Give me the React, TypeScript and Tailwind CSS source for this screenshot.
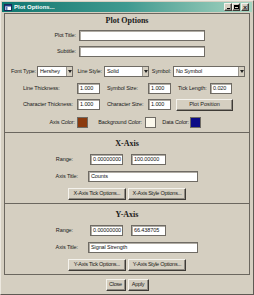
import React from 'react';

const sans = "font-['Liberation_Sans',Arial,sans-serif]";

const Label = ({ children, className = '' }: { children: React.ReactNode; className?: string }) => (
  <div className={`text-[5.5px] tracking-[-0.1px] leading-none text-[#1a1a1a] whitespace-nowrap ${className}`}>{children}</div>
);

const Field = ({ value = '', className = '' }: { value?: string; className?: string }) => (
  <div
    className={`h-[11px] bg-white border border-[#6f6b64] shadow-[inset_1px_1px_0_#b0aca4] flex items-center pl-[2px] text-[5.5px] tracking-[-0.1px] leading-none text-[#111] whitespace-nowrap overflow-hidden ${className}`}
  >
    {value}
  </div>
);

const Select = ({ value, className = '' }: { value: string; className?: string }) => (
  <div className={`h-[11px] bg-white border border-[#6f6b64] flex items-center ${className}`}>
    <span className="flex-1 pl-[2px] text-[5.5px] tracking-[-0.1px] leading-none text-[#111] whitespace-nowrap">{value}</span>
    <span className="w-[6px] h-[9px] bg-[#d5cfc1] border-l border-[#9a968e] flex items-center justify-center">
      <svg width="4" height="3" viewBox="0 0 4 3">
        <path d="M0 0h4L2 3z" fill="#222" />
      </svg>
    </span>
  </div>
);

const Btn = ({ children, className = '' }: { children: React.ReactNode; className?: string }) => (
  <div
    className={`h-[12px] bg-[#d5cfc1] border border-t-[#f4f2ec] border-l-[#f4f2ec] border-r-[#3e3b36] border-b-[#3e3b36] shadow-[inset_-1px_-1px_0_#8e8a82] flex items-center justify-center text-[5.5px] tracking-[-0.25px] leading-none text-[#1a1a1a] whitespace-pre ${className}`}
  >
    {children}
  </div>
);

const Heading = ({ children }: { children: React.ReactNode }) => (
  <div className="h-[11px] flex items-center justify-center font-['Liberation_Serif','Times_New_Roman',serif] font-bold text-[8px] leading-none text-[#1a1a1a]">
    {children}
  </div>
);

const AxisFrame = ({ name, from, to, title }: { name: string; from: string; to: string; title: string }) => (
  <div className="h-[71px] border border-t-0 border-[#6b675f] flex flex-col">
    <div className="mt-[5px]">
      <Heading>{name}-Axis</Heading>
    </div>
    <div className="mt-[5px] flex items-center h-[11px]">
      <Label className="w-[68px] text-right">Range:</Label>
      <Field value={from} className="ml-[17px] w-[33px]" />
      <Field value={to} className="ml-[8px] w-[35px]" />
    </div>
    <div className="mt-[6px] flex items-center h-[11px]">
      <Label className="w-[73px] text-right">Axis Title:</Label>
      <Field value={title} className="ml-[10px] w-[110px]" />
    </div>
    <div className="mt-[6px] flex items-center">
      <Btn className="ml-[63px] w-[58px]">{name}-Axis Tick Options...</Btn>
      <Btn className="ml-[2px] w-[58px]">{name}-Axis Style Options...</Btn>
    </div>
  </div>
);

export default function App() {
  return (
    <div className={`w-[254px] h-[295px] bg-[#d5cfc1] border border-t-[#ece8df] border-l-[#ece8df] border-r-[#5e5a53] border-b-[#5e5a53] flex flex-col ${sans}`}>
      {/* title bar */}
      <div className="mt-[1px] mx-[1px] h-[10px] bg-gradient-to-r from-[#0b7770] via-[#3f9a90] to-[#a6d5c1] flex items-center">
        <svg width="8" height="7" viewBox="0 0 8 7" className="ml-[2px]">
          <rect x="0.5" y="0.5" width="7" height="6" fill="#fff" stroke="#1b2a55" />
          <rect x="1" y="1" width="6" height="1.5" fill="#1f3a8a" />
          <rect x="1.5" y="3" width="2" height="3" fill="#5b7fbf" />
        </svg>
        <span className="ml-[2px] text-[6px] font-bold text-white leading-none">Plot Options...</span>
        <div className="ml-auto mr-[3px] flex items-center">
          <Btn className="!h-[8px] w-[8px] items-end pb-[1px]">
            <span className="w-[3px] h-[1px] bg-black" />
          </Btn>
          <Btn className="!h-[8px] w-[8px]">
            <span className="w-[5px] h-[4px] border border-black border-t-2" />
          </Btn>
          <Btn className="!h-[8px] w-[8px] ml-[1px]">
            <span className="text-[7px] font-bold leading-none">×</span>
          </Btn>
        </div>
      </div>

      <div className="mt-[1px] px-[3px] flex flex-col">
        {/* Plot options */}
        <div className="h-[120px] border border-[#6b675f] flex flex-col">
          <div className="mt-[1px]">
            <Heading>Plot Options</Heading>
          </div>
          <div className="mt-[4px] flex items-center h-[11px]">
            <Label className="w-[71px] text-right">Plot Title:</Label>
            <Field className="ml-[3px] w-[126px]" />
          </div>
          <div className="mt-[5px] flex items-center h-[11px]">
            <Label className="w-[71px] text-right">Subtitle:</Label>
            <Field className="ml-[3px] w-[126px]" />
          </div>
          <div className="mt-[9px] flex items-center h-[11px]">
            <Label className="w-[31px] text-right">Font Type:</Label>
            <Select value="Hershey" className="ml-[1px] w-[36px]" />
            <Label className="w-[29px] text-right">Line Style:</Label>
            <Select value="Solid" className="ml-[2px] w-[45px]" />
            <Label className="w-[22px] text-right">Symbol:</Label>
            <Select value="No Symbol" className="ml-[2px] w-[72px]" />
          </div>
          <div className="mt-[6px] flex items-center h-[11px]">
            <Label className="ml-[18px] w-[54px]">Line Thickness:</Label>
            <Field value="1.000" className="w-[23px]" />
            <Label className="ml-[7px] w-[41px]">Symbol Size:</Label>
            <Field value="1.000" className="w-[23px]" />
            <Label className="ml-[7px] w-[32px]">Tick Length:</Label>
            <Field value="0.020" className="w-[22px]" />
          </div>
          <div className="mt-[5px] flex items-center h-[11px]">
            <Label className="ml-[18px] w-[54px]">Character Thickness:</Label>
            <Field value="1.000" className="w-[23px]" />
            <Label className="ml-[7px] w-[41px]">Character Size:</Label>
            <Field value="1.000" className="w-[23px]" />
            <Btn className="ml-[5px] w-[57px] !tracking-normal">Plot Position</Btn>
          </div>
          <div className="mt-[7px] flex items-center h-[11px]">
            <Label className="w-[72px] text-right pr-[2px]">Axis Color:</Label>
            <div className="w-[11px] h-[11px] bg-[#8b3a0e] border border-[#6f6b64]" />
            <Label className="w-[57px] text-right pr-[3px]">Background Color:</Label>
            <div className="w-[11px] h-[11px] bg-[#fbf8ec] border border-[#6f6b64]" />
            <Label className="w-[34px] text-right pr-[1px]">Data Color:</Label>
            <div className="w-[11px] h-[11px] bg-[#0b0b86] border border-[#6f6b64]" />
          </div>
        </div>

        <AxisFrame name="X" from="0.00000000" to="100.00000" title="Counts" />
        <AxisFrame name="Y" from="0.00000000" to="66.438705" title="Signal Strength" />

        <div className="mt-[4px] flex justify-center gap-[2px]">
          <Btn className="w-[20px]">Close</Btn>
          <Btn className="w-[21px]">Apply</Btn>
        </div>
      </div>
    </div>
  );
}
